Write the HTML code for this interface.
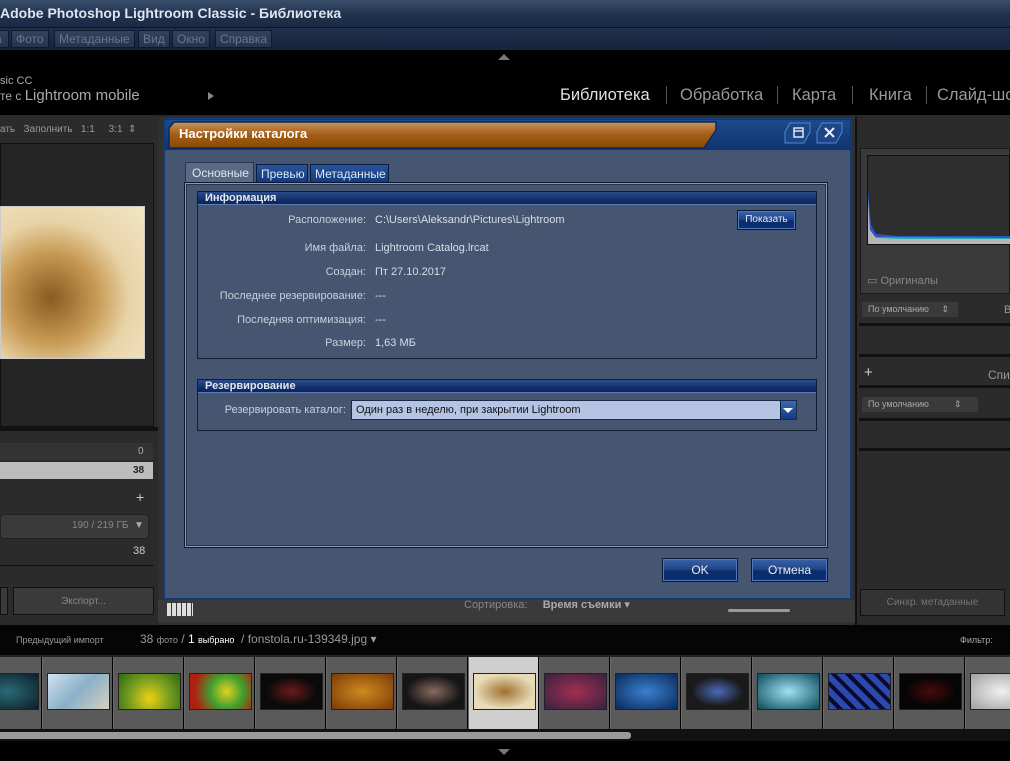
<!DOCTYPE html>
<html><head><meta charset="utf-8"><style>
*{margin:0;padding:0;box-sizing:border-box}
body{width:1010px;height:761px;overflow:hidden;background:#000;font-family:"Liberation Sans","DejaVu Sans",sans-serif;position:relative;color:#ccc}
.a{position:absolute}
.mb{position:absolute;top:30px;height:18px;border:1px solid #0d1a30;background:linear-gradient(#34445e,#26344d);color:#66778f;font-size:12px;line-height:16px;padding:0 4px}
.lbl{position:absolute;width:200px;text-align:right;font-size:11px;color:#c8d0dc;left:166px}
.val{position:absolute;left:375px;font-size:11px;color:#d8dee8}
.grp{position:absolute;left:197px;width:620px;border:1px solid #141e33;}
.gh{height:13px;background:linear-gradient(#2c4d8a,#14306a 60%,#0c245a);border-bottom:1px solid #5a7ab8;color:#e4e8f0;font-weight:bold;font-size:11px;line-height:12px;padding-left:7px}
.btn{position:absolute;background:linear-gradient(#3b63a8,#1c4186 50%,#0b2b6b 52%,#0f3070);border:1px solid #0a1a3c;box-shadow:inset 0 0 0 1px #4d78bd;color:#e8ecf4;font-size:12px;text-align:center}
.th{position:absolute;top:657px;width:70px;height:72px;border-left:1px solid #6a6a6a;background:#5a5a5a}
.th i{position:absolute;left:4px;top:16px;width:63px;height:37px;border:1px solid #222;display:block}
.nv{position:absolute;top:86px;font-size:16.5px;color:#999;white-space:nowrap}
.sp{position:absolute;top:86px;width:1px;height:18px;background:#555}
</style></head><body>
<div class="a" style="left:0;top:0;width:1010px;height:28px;background:linear-gradient(#3a4e6c,#22334f 50%,#1a2a44);border-bottom:1px solid #0a1428"></div>
<div class="a" style="left:0;top:5px;font-size:14px;font-weight:bold;color:#dfe5ee">Adobe Photoshop Lightroom Classic - Библиотека</div>
<div class="a" style="left:0;top:28px;width:1010px;height:22px;background:linear-gradient(#1f304c,#16243d)"></div>
<div class="mb" style="left:-10px;width:19px">а</div>
<div class="mb" style="left:11px">Фото</div>
<div class="mb" style="left:54px">Метаданные</div>
<div class="mb" style="left:138px">Вид</div>
<div class="mb" style="left:172px">Окно</div>
<div class="mb" style="left:215px">Справка</div>
<div class="a" style="left:498px;top:54px;width:0;height:0;border-left:6px solid transparent;border-right:6px solid transparent;border-bottom:6px solid #777"></div>
<div class="a" style="left:0;top:75px;font-size:11px;color:#aaa">sic CC</div>
<div class="a" style="left:0;top:87px;font-size:15px;color:#aaa"><span style="font-size:12px">те с </span>Lightroom mobile</div>
<div class="a" style="left:208px;top:92px;border-left:6px solid #888;border-top:4px solid transparent;border-bottom:4px solid transparent"></div>
<div class="nv" style="left:560px;color:#e0e0e0">Библиотека</div>
<div class="sp" style="left:666px"></div>
<div class="nv" style="left:680px">Обработка</div>
<div class="sp" style="left:777px"></div>
<div class="nv" style="left:792px">Карта</div>
<div class="sp" style="left:852px"></div>
<div class="nv" style="left:869px">Книга</div>
<div class="sp" style="left:926px"></div>
<div class="nv" style="left:937px">Слайд-шоу</div>
<div class="a" style="left:0;top:115px;width:1010px;height:2px;background:#2a2a2a"></div>
<div class="a" style="left:0;top:117px;width:158px;height:508px;background:#2b2b2b"></div>
<div class="a" style="left:0;top:124px;font-size:10px;color:#999;white-space:nowrap">ать &nbsp; Заполнить &nbsp; 1:1 &nbsp; &nbsp; 3:1 &nbsp;⇕</div>
<div class="a" style="left:0;top:143px;width:154px;height:284px;background:#252525;border:1px solid #111"></div>
<div class="a" style="left:0;top:206px;width:145px;height:153px;border:1px solid #ccc;background:radial-gradient(ellipse at 35% 60%,#8a5a20,#c79b55 35%,#e9d4a8 60%,#f3e6c6);"></div>
<div class="a" style="left:0;top:427px;width:158px;height:4px;background:#111"></div>
<div class="a" style="left:0;top:443px;width:153px;height:17px;background:#333"></div>
<div class="a" style="left:138px;top:446px;font-size:10px;color:#aaa">0</div>
<div class="a" style="left:0;top:462px;width:153px;height:17px;background:#bdbdbd"></div>
<div class="a" style="left:133px;top:465px;font-size:10px;color:#222;font-weight:bold">38</div>
<div class="a" style="left:136px;top:489px;font-size:14px;color:#ccc">+</div>
<div class="a" style="left:0;top:514px;width:149px;height:25px;background:#3a3a3a;border:1px solid #222;border-radius:4px"></div>
<div class="a" style="left:72px;top:520px;font-size:10px;color:#888">190 / 219 ГБ &nbsp;<span style="color:#aaa">▼</span></div>
<div class="a" style="left:133px;top:545px;font-size:11px;color:#ccc">38</div>
<div class="a" style="left:0;top:565px;width:154px;height:1px;background:#111"></div>
<div class="a" style="left:0;top:587px;width:8px;height:28px;background:#3a3a3a;border:1px solid #111"></div>
<div class="a" style="left:13px;top:587px;width:141px;height:28px;background:#3a3a3a;border:1px solid #111;font-size:10px;color:#888;text-align:center;line-height:28px">Экспорт...</div>
<div class="a" style="left:158px;top:117px;width:697px;height:508px;background:#303030"></div>
<div class="a" style="left:158px;top:600px;width:697px;height:22px;background:#3a3a3a"></div>
<div class="a" style="left:167px;top:603px;width:26px;height:13px;background:repeating-linear-gradient(90deg,#ddd 0 4px,#3a3a3a 4px 5px)"></div>
<div class="a" style="left:464px;top:598px;font-size:11px;color:#888">Сортировка: &nbsp; &nbsp; <b style="color:#aaa">Время съемки ▾</b></div>
<div class="a" style="left:728px;top:609px;width:62px;height:3px;background:#999;border-radius:2px"></div>
<div class="a" style="left:855px;top:117px;width:155px;height:508px;background:#2b2b2b;border-left:2px solid #111"></div>
<div class="a" style="left:860px;top:148px;width:150px;height:146px;background:#3a3a3a;border:1px solid #1a1a1a"></div>
<div class="a" style="left:867px;top:155px;width:143px;height:90px;background:#2e2e2e;border:1px solid #111"></div>
<svg class="a" style="left:868px;top:190px" width="142" height="55"><path d="M0,0 L3,35 L8,44 L30,46 L142,46 L142,52 L0,52Z" fill="#2a55c8"/><path d="M0,47 L142,48 L142,52 L0,52Z" fill="#25b0b5"/><path d="M0,8 L2,40 L8,48 L30,49 L142,49 L142,54 L0,54Z" fill="#b5b5b5"/></svg>
<div class="a" style="left:867px;top:274px;font-size:11px;color:#888">▭ Оригиналы</div>
<div class="a" style="left:862px;top:302px;width:96px;height:15px;background:#3a3a3a;font-size:9px;color:#aaa;padding:2px 6px">По умолчанию &nbsp; &nbsp; ⇕</div>
<div class="a" style="left:1004px;top:304px;font-size:11px;color:#999">В</div>
<div class="a" style="left:859px;top:323px;width:151px;height:3px;background:#111"></div>
<div class="a" style="left:859px;top:354px;width:151px;height:3px;background:#111"></div>
<div class="a" style="left:864px;top:364px;font-size:15px;color:#ccc">+</div>
<div class="a" style="left:988px;top:368px;font-size:12px;color:#999">Спи</div>
<div class="a" style="left:859px;top:385px;width:151px;height:3px;background:#111"></div>
<div class="a" style="left:862px;top:397px;width:116px;height:15px;background:#3a3a3a;font-size:9px;color:#aaa;padding:2px 6px">По умолчанию &nbsp; &nbsp; &nbsp; &nbsp; &nbsp;⇕</div>
<div class="a" style="left:859px;top:418px;width:151px;height:3px;background:#111"></div>
<div class="a" style="left:859px;top:448px;width:151px;height:3px;background:#111"></div>
<div class="a" style="left:860px;top:589px;width:145px;height:27px;background:#333;border:1px solid #111;font-size:10px;color:#777;text-align:center;line-height:26px">Синхр. метаданные</div>
<div class="a" style="left:163px;top:118px;width:689px;height:482px;background:#465670;border:2px solid #0f3a78;box-shadow:inset 0 0 0 1px #2a5da0"></div>
<div class="a" style="left:165px;top:120px;width:685px;height:30px;background:linear-gradient(#1d4a8c,#0f3470)"></div>
<svg class="a" style="left:166px;top:120px" width="555" height="30"><defs><linearGradient id="og" x1="0" y1="0" x2="0" y2="1"><stop offset="0" stop-color="#c9925a"/><stop offset=".5" stop-color="#a25d15"/><stop offset="1" stop-color="#8a4a05"/></linearGradient></defs><path d="M8,2 L550,2 L550,10 L538,28 L3,28 L3,8Z" fill="url(#og)" stroke="#082a60" stroke-width="1.5"/></svg>
<div class="a" style="left:179px;top:126px;font-size:13px;font-weight:bold;color:#fff">Настройки каталога</div>
<svg class="a" style="left:784px;top:122px" width="64" height="22"><path d="M6,1 L26,1 L26,10 L20,21 L1,21 L1,10Z" fill="#1b4788" stroke="#5a86c6"/><rect x="10" y="6" width="9" height="9" fill="none" stroke="#dfe6f0" stroke-width="1.5"/><line x1="10" y1="9" x2="19" y2="9" stroke="#dfe6f0" stroke-width="1.5"/><path d="M38,1 L58,1 L58,10 L52,21 L33,21 L33,10Z" fill="#1b4788" stroke="#5a86c6"/><path d="M41,6 L50,15 M50,6 L41,15" stroke="#eef" stroke-width="2"/></svg>
<div class="a" style="left:185px;top:162px;width:69px;height:21px;background:#5a6a84;border:1px solid #2a3650;font-size:12px;color:#e0e4ec;padding:3px 6px">Основные</div>
<div class="a" style="left:256px;top:164px;width:52px;height:19px;background:linear-gradient(#2a559a,#123a80);border:1px solid #0a1c40;font-size:12px;color:#e0e6f2;padding:2px 4px">Превью</div>
<div class="a" style="left:310px;top:164px;width:79px;height:19px;background:linear-gradient(#2a559a,#123a80);border:1px solid #0a1c40;font-size:12px;color:#e0e6f2;padding:2px 4px">Метаданные</div>
<div class="a" style="left:184px;top:182px;width:644px;height:366px;border:1px solid #0d1830;box-shadow:inset 0 0 0 1px #8a9ab4,inset 0 0 0 2px #243250"></div>
<div class="grp" style="top:191px;height:168px"><div class="gh">Информация</div></div>
<div class="lbl" style="top:214px">Расположение:</div><div class="val" style="top:214px">C:\Users\Aleksandr\Pictures\Lightroom</div>
<div class="btn" style="left:737px;top:210px;width:59px;height:20px;font-size:10px;line-height:18px">Показать</div>
<div class="lbl" style="top:242px">Имя файла:</div><div class="val" style="top:242px">Lightroom Catalog.lrcat</div>
<div class="lbl" style="top:266px">Создан:</div><div class="val" style="top:266px">Пт 27.10.2017</div>
<div class="lbl" style="top:290px">Последнее резервирование:</div><div class="val" style="top:290px">---</div>
<div class="lbl" style="top:314px">Последняя оптимизация:</div><div class="val" style="top:314px">---</div>
<div class="lbl" style="top:337px">Размер:</div><div class="val" style="top:337px">1,63 МБ</div>
<div class="grp" style="top:379px;height:52px"><div class="gh">Резервирование</div></div>
<div class="a" style="left:190px;top:404px;width:156px;text-align:right;font-size:11px;color:#c8d0dc">Резервировать каталог:</div>
<div class="a" style="left:351px;top:400px;width:446px;height:20px;background:#b4c4e2;border:1px solid #1a2a48;font-size:11px;color:#111;padding:3px 4px">Один раз в неделю, при закрытии Lightroom</div>
<div class="a" style="left:780px;top:401px;width:16px;height:18px;background:linear-gradient(#3a6ab4,#123a80);border-left:1px solid #0a1c40"></div>
<div class="a" style="left:783px;top:408px;border-top:5px solid #fff;border-left:5px solid transparent;border-right:5px solid transparent"></div>
<div class="btn" style="left:662px;top:558px;width:76px;height:24px;line-height:22px">OK</div>
<div class="btn" style="left:751px;top:558px;width:77px;height:24px;line-height:22px">Отмена</div>
<div class="a" style="left:0;top:625px;width:1010px;height:30px;background:#050505"></div>
<div class="a" style="left:16px;top:635px;font-size:9px;color:#999">Предыдущий импорт</div>
<div class="a" style="left:140px;top:632px;font-size:12px;color:#999;white-space:nowrap">38 <span style="font-size:9px">фото</span> / <span style="color:#fff">1 <span style="font-size:9px">выбрано</span></span> &nbsp;/ fonstola.ru-139349.jpg ▾</div>
<div class="a" style="left:960px;top:635px;font-size:9px;color:#aaa">Фильтр:</div>
<div class="a" style="left:0;top:655px;width:1010px;height:2px;background:#222"></div>
<div class="th" style="left:-29px"><i style="background:radial-gradient(#2a6b78,#0c1e28)"></i></div>
<div class="th" style="left:42px"><i style="background:linear-gradient(135deg,#cfe2ef,#8ab0c8,#d9d0c0)"></i></div>
<div class="th" style="left:113px"><i style="background:radial-gradient(circle at 50% 70%,#f0d010,#7aa020 50%,#2a6a10)"></i></div>
<div class="th" style="left:184px"><i style="background:radial-gradient(circle at 60% 50%,#e6d020,#40a030 40%,#b02010 80%)"></i></div>
<div class="th" style="left:255px"><i style="background:radial-gradient(#6a1a1a,#0a0a0a 60%)"></i></div>
<div class="th" style="left:326px"><i style="background:radial-gradient(#d08a20,#7a3a08)"></i></div>
<div class="th" style="left:397px"><i style="background:radial-gradient(#8a6a60,#151515 65%)"></i></div>
<div class="th" style="left:468px;background:#cfcfcf"><i style="background:radial-gradient(#a07030,#e8dcb8 70%)"></i></div>
<div class="th" style="left:539px"><i style="background:radial-gradient(#a03050,#3a2040)"></i></div>
<div class="th" style="left:610px"><i style="background:radial-gradient(#3a80d0,#0a2a5a)"></i></div>
<div class="th" style="left:681px"><i style="background:radial-gradient(#4a6ab8,#1a1a1a 60%)"></i></div>
<div class="th" style="left:752px"><i style="background:radial-gradient(#a0e0f0,#0a4a5a)"></i></div>
<div class="th" style="left:823px"><i style="background:repeating-linear-gradient(45deg,#2a4ab0 0 6px,#0a0a30 6px 10px)"></i></div>
<div class="th" style="left:894px"><i style="background:radial-gradient(#4a0a0a,#050505 60%)"></i></div>
<div class="th" style="left:965px"><i style="background:radial-gradient(#f0f0f0,#a0a0a0)"></i></div>
<div class="a" style="left:0;top:729px;width:1010px;height:12px;background:#111"></div>
<div class="a" style="left:0;top:732px;width:631px;height:7px;background:#9a9a9a;border-radius:0 3px 3px 0"></div>
<div class="a" style="left:498px;top:749px;border-top:6px solid #777;border-left:6px solid transparent;border-right:6px solid transparent"></div>
</body></html>
